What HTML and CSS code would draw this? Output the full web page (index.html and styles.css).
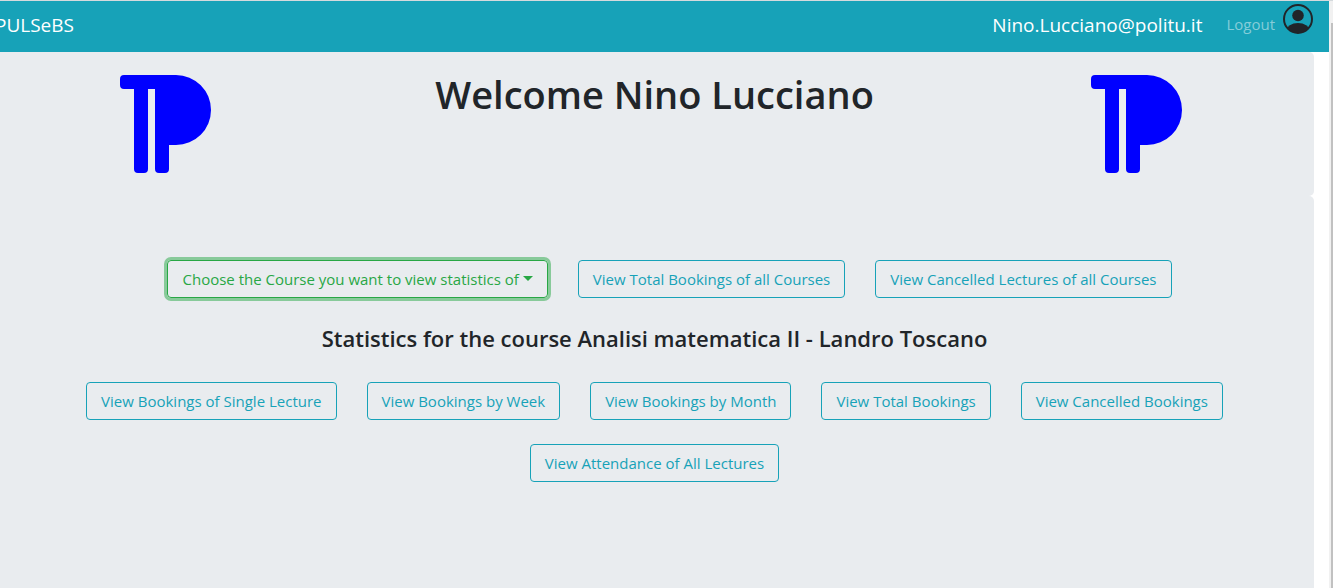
FILE: index.html
```
<!DOCTYPE html>
<html lang="en">
<head>
<meta charset="utf-8">
<meta name="viewport" content="width=device-width, initial-scale=1">
<title>PULSeBS</title>
<link rel="stylesheet" href="styles.css">
</head>
<body>
<svg class="defs" aria-hidden="true">
  <symbol id="logo" viewBox="0 0 91 98">
    <path fill="#00f" d="M4 0H56A35 35 0 0 1 56 70H49V94Q49 98 45 98H39Q35 98 35 94V14H28V94Q28 98 24 98H18Q14 98 14 94V14H4Q0 14 0 10V4Q0 0 4 0Z"/>
  </symbol>
</svg>
<div class="page">
  <header class="navbar">
    <a class="brand" href="#">PULSeBS</a>
    <nav class="account">
      <span class="user">Nino.Lucciano@politu.it</span>
      <a class="logout" href="#">Logout</a>
      <svg class="avatar" viewBox="0 0 30 30" role="img" aria-label="User">
        <clipPath id="disc"><circle cx="15" cy="15" r="14"/></clipPath>
        <circle cx="15" cy="15" r="14" fill="none" stroke="#212529" stroke-width="2"/>
        <circle cx="15" cy="11.5" r="5.8" fill="#212529"/>
        <ellipse cx="15" cy="27" rx="11.5" ry="8" fill="#212529" clip-path="url(#disc)"/>
      </svg>
    </nav>
  </header>
  <main class="content">
    <section class="panel welcome">
      <svg class="logo" role="img" aria-label="Logo"><use href="#logo"/></svg>
      <h1>Welcome Nino Lucciano</h1>
      <svg class="logo" role="img" aria-label="Logo"><use href="#logo"/></svg>
    </section>
    <section class="panel stats">
      <div class="row row-main">
        <button class="btn btn-course" type="button">Choose the Course you want to view statistics of<span class="caret"></span></button>
        <button class="btn" type="button">View Total Bookings of all Courses</button>
        <button class="btn" type="button">View Cancelled Lectures of all Courses</button>
      </div>
      <h2>Statistics for the course Analisi matematica II - Landro Toscano</h2>
      <div class="row">
        <button class="btn" type="button">View Bookings of Single Lecture</button>
        <button class="btn" type="button">View Bookings by Week</button>
        <button class="btn" type="button">View Bookings by Month</button>
        <button class="btn" type="button">View Total Bookings</button>
        <button class="btn" type="button">View Cancelled Bookings</button>
        <button class="btn" type="button">View Attendance of All Lectures</button>
      </div>
    </section>
  </main>
</div>
<div class="scrollbar"></div>
</body>
</html>
```
FILE: styles.css
```
* { box-sizing: border-box; }

body {
  margin: 0;
  height: 100vh;
  display: flex;
  overflow: hidden;
  background: #fff;
  color: #212529;
  border-top: 1px solid #d5dadd;
  font-family: "Segoe UI", "Open Sans", "Noto Sans", sans-serif;
  font-size: 15px;
  line-height: 24px;
}

.defs { position: absolute; width: 0; height: 0; }

.page {
  flex: 1;
  min-width: 0;
  display: flex;
  flex-direction: column;
}

.navbar {
  display: flex;
  justify-content: space-between;
  padding: 3px 16px 0 0;
  height: 51px;
  background: #17a2b8;
}

.brand {
  margin: 6px 0 0 -5px;
  color: #fff;
  font-size: 19px;
  line-height: 30px;
  text-decoration: none;
}

.account { display: flex; }

.user {
  margin: 6px 24px 0 0;
  color: #fff;
  font-size: 19px;
  line-height: 30px;
}

.logout {
  margin: 8px 8px 0 0;
  color: #85cdd9;
  text-decoration: none;
}

.avatar { width: 30px; height: 30px; }

.content {
  flex: 1;
  display: flex;
  flex-direction: column;
  margin: 0 15px 0 -5px;
}

.panel {
  background: #e9ecef;
  border-radius: 5px;
}

.welcome {
  display: flex;
  padding: 23px 10% 23px 125px;
}

.logo { width: 91px; height: 98px; }

h1 {
  flex: 1;
  margin: 0;
  padding-left: 7px;
  text-align: center;
  font-size: 38px;
  line-height: 38px;
  font-weight: 600;
}

.stats {
  flex: 1;
  padding: 64px 75px;
  border-radius: 5px 5px 0 0;
}

.row {
  display: flex;
  flex-wrap: wrap;
  justify-content: center;
  gap: 24px 30px;
}

.row-main { padding-left: 30px; }

h2 {
  margin: 24px 0 28px;
  text-align: center;
  font-size: 22px;
  line-height: 32px;
  font-weight: 600;
}

.btn {
  padding: 6px 14px;
  border: 1px solid #17a2b8;
  border-radius: 4px;
  background: transparent;
  color: #17a2b8;
  font: inherit;
  white-space: nowrap;
}

.btn-course {
  border-color: #28a745;
  color: #28a745;
  box-shadow: 0 0 0 3px rgba(40, 167, 69, 0.5);
}

.caret {
  display: inline-block;
  margin-left: 4px;
  vertical-align: 4px;
  border-top: 5px solid;
  border-left: 5px solid transparent;
  border-right: 5px solid transparent;
}

.scrollbar {
  width: 4px;
  border-left: 2px solid #f1f1f1;
  background: linear-gradient(#f1f1f1 22px, #c1c1c1 22px);
}
```
